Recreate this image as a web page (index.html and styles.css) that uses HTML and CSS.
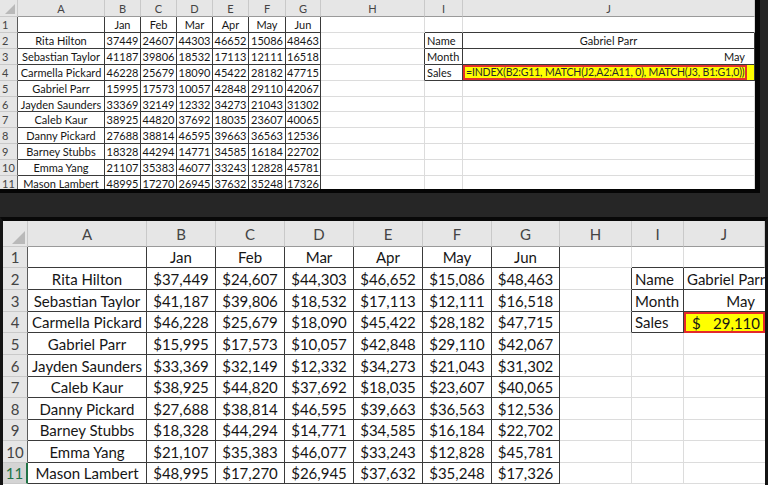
FILE: index.html
```html
<!DOCTYPE html>
<html>
<head>
<meta charset="utf-8">
<link rel="stylesheet" href="styles.css">
</head>
<body>
<div class="screen">
  <div class="top">
    <div class="sheet s1">
      <div class="cn"></div><div class="hd">A</div><div class="hd">B</div><div class="hd">C</div><div class="hd">D</div><div class="hd">E</div><div class="hd">F</div><div class="hd">G</div><div class="hd">H</div><div class="hd">I</div><div class="hd">J</div>
      <div class="rh">1</div><div class="t"></div><div class="t">Jan</div><div class="t">Feb</div><div class="t">Mar</div><div class="t">Apr</div><div class="t">May</div><div class="t">Jun</div><div class="g"></div><div class="g bb"></div><div class="g bb"></div>
      <div class="rh">2</div><div class="t">Rita Hilton</div><div class="t">37449</div><div class="t">24607</div><div class="t">44303</div><div class="t">46652</div><div class="t">15086</div><div class="t">48463</div><div class="g br"></div><div class="t l">Name</div><div class="t">Gabriel Parr</div>
      <div class="rh">3</div><div class="t">Sebastian Taylor</div><div class="t">41187</div><div class="t">39806</div><div class="t">18532</div><div class="t">17113</div><div class="t">12111</div><div class="t">16518</div><div class="g br"></div><div class="t l">Month</div><div class="t r">May</div>
      <div class="rh">4</div><div class="t">Carmella Pickard</div><div class="t">46228</div><div class="t">25679</div><div class="t">18090</div><div class="t">45422</div><div class="t">28182</div><div class="t">47715</div><div class="g br"></div><div class="t l">Sales</div><div class="t fx"><span class="edit">=INDEX(B2:G11, MATCH(J2,A2:A11, 0), MATCH(J3, B1:G1,0))</span></div>
      <div class="rh">5</div><div class="t">Gabriel Parr</div><div class="t">15995</div><div class="t">17573</div><div class="t">10057</div><div class="t">42848</div><div class="t">29110</div><div class="t">42067</div><div class="g"></div><div class="g"></div><div class="g"></div>
      <div class="rh">6</div><div class="t">Jayden Saunders</div><div class="t">33369</div><div class="t">32149</div><div class="t">12332</div><div class="t">34273</div><div class="t">21043</div><div class="t">31302</div><div class="g"></div><div class="g"></div><div class="g"></div>
      <div class="rh">7</div><div class="t">Caleb Kaur</div><div class="t">38925</div><div class="t">44820</div><div class="t">37692</div><div class="t">18035</div><div class="t">23607</div><div class="t">40065</div><div class="g"></div><div class="g"></div><div class="g"></div>
      <div class="rh">8</div><div class="t">Danny Pickard</div><div class="t">27688</div><div class="t">38814</div><div class="t">46595</div><div class="t">39663</div><div class="t">36563</div><div class="t">12536</div><div class="g"></div><div class="g"></div><div class="g"></div>
      <div class="rh">9</div><div class="t">Barney Stubbs</div><div class="t">18328</div><div class="t">44294</div><div class="t">14771</div><div class="t">34585</div><div class="t">16184</div><div class="t">22702</div><div class="g"></div><div class="g"></div><div class="g"></div>
      <div class="rh">10</div><div class="t">Emma Yang</div><div class="t">21107</div><div class="t">35383</div><div class="t">46077</div><div class="t">33243</div><div class="t">12828</div><div class="t">45781</div><div class="g"></div><div class="g"></div><div class="g"></div>
      <div class="rh">11</div><div class="t">Mason Lambert</div><div class="t">48995</div><div class="t">17270</div><div class="t">26945</div><div class="t">37632</div><div class="t">35248</div><div class="t">17326</div><div class="g"></div><div class="g"></div><div class="g"></div>
    </div>
  </div>
  <div class="gap"></div>
  <div class="bottom">
    <div class="sheet s2">
      <div class="cn"></div><div class="hd">A</div><div class="hd">B</div><div class="hd">C</div><div class="hd">D</div><div class="hd">E</div><div class="hd">F</div><div class="hd">G</div><div class="hd">H</div><div class="hd">I</div><div class="hd">J</div>
      <div class="rh">1</div><div class="t"></div><div class="t">Jan</div><div class="t">Feb</div><div class="t">Mar</div><div class="t">Apr</div><div class="t">May</div><div class="t">Jun</div><div class="g"></div><div class="g bb"></div><div class="g bb"></div>
      <div class="rh">2</div><div class="t">Rita Hilton</div><div class="t">$37,449</div><div class="t">$24,607</div><div class="t">$44,303</div><div class="t">$46,652</div><div class="t">$15,086</div><div class="t">$48,463</div><div class="g br"></div><div class="t l">Name</div><div class="t l nr">Gabriel Parr</div>
      <div class="rh">3</div><div class="t">Sebastian Taylor</div><div class="t">$41,187</div><div class="t">$39,806</div><div class="t">$18,532</div><div class="t">$17,113</div><div class="t">$12,111</div><div class="t">$16,518</div><div class="g br"></div><div class="t l">Month</div><div class="t r nr">May</div>
      <div class="rh">4</div><div class="t">Carmella Pickard</div><div class="t">$46,228</div><div class="t">$25,679</div><div class="t">$18,090</div><div class="t">$45,422</div><div class="t">$28,182</div><div class="t">$47,715</div><div class="g br"></div><div class="t l">Sales</div><div class="sel"><span>$</span><span>29,110</span></div>
      <div class="rh">5</div><div class="t">Gabriel Parr</div><div class="t">$15,995</div><div class="t">$17,573</div><div class="t">$10,057</div><div class="t">$42,848</div><div class="t">$29,110</div><div class="t">$42,067</div><div class="g"></div><div class="g"></div><div class="g nr"></div>
      <div class="rh">6</div><div class="t">Jayden Saunders</div><div class="t">$33,369</div><div class="t">$32,149</div><div class="t">$12,332</div><div class="t">$34,273</div><div class="t">$21,043</div><div class="t">$31,302</div><div class="g"></div><div class="g"></div><div class="g nr"></div>
      <div class="rh">7</div><div class="t">Caleb Kaur</div><div class="t">$38,925</div><div class="t">$44,820</div><div class="t">$37,692</div><div class="t">$18,035</div><div class="t">$23,607</div><div class="t">$40,065</div><div class="g"></div><div class="g"></div><div class="g nr"></div>
      <div class="rh">8</div><div class="t">Danny Pickard</div><div class="t">$27,688</div><div class="t">$38,814</div><div class="t">$46,595</div><div class="t">$39,663</div><div class="t">$36,563</div><div class="t">$12,536</div><div class="g"></div><div class="g"></div><div class="g nr"></div>
      <div class="rh">9</div><div class="t">Barney Stubbs</div><div class="t">$18,328</div><div class="t">$44,294</div><div class="t">$14,771</div><div class="t">$34,585</div><div class="t">$16,184</div><div class="t">$22,702</div><div class="g"></div><div class="g"></div><div class="g nr"></div>
      <div class="rh">10</div><div class="t">Emma Yang</div><div class="t">$21,107</div><div class="t">$35,383</div><div class="t">$46,077</div><div class="t">$33,243</div><div class="t">$12,828</div><div class="t">$45,781</div><div class="g"></div><div class="g"></div><div class="g nr"></div>
      <div class="rh cur">11</div><div class="t">Mason Lambert</div><div class="t">$48,995</div><div class="t">$17,270</div><div class="t">$26,945</div><div class="t">$37,632</div><div class="t">$35,248</div><div class="t">$17,326</div><div class="g"></div><div class="g"></div><div class="g nr"></div>
    </div>
  </div>
</div>
</body>
</html>
```

FILE: styles.css
```css
* { box-sizing: border-box; margin: 0; padding: 0; }
html, body { width: 768px; height: 485px; overflow: hidden; }
body { background: #262626; font-family: Lato, "Open Sans", sans-serif; color: #161616; }

.screen { display: flex; flex-direction: column; }

.top {
  width: 760px;
  height: 193px;
  background: #fff;
  border-right: 5px solid #050505;
  border-bottom: 4px solid #050505;
  overflow: hidden;
}
.gap { height: 24px; }
.bottom {
  width: 768px;
  height: 268px;
  background: #fff;
  border-top: 4px solid #080808;
  border-left: 3px solid #141414;
  border-right: 3px solid #141414;
  overflow: hidden;
}

.sheet { display: grid; }
.s1 {
  font-size: 11px;
  grid-template-columns: 18px 87px 36px 36px 36px 36px 37px 35px 104px 38px 292px;
  grid-template-rows: 17px 16px 16px 16px 16px 16px 15px 16px 16px 16px 16px 16px;
}
.s2 {
  font-size: 15px;
  grid-template-columns: 25px 119px 69px 69px 69px 69px 69px 68px 72px 52px 81px;
  grid-template-rows: 26px 21px 22px 22px 21px 22px 22px 21px 22px 21px 22px 21px;
}

.sheet > div {
  display: flex;
  align-items: center;
  justify-content: center;
  white-space: nowrap;
  overflow: hidden;
}

.cn, .hd, .rh {
  background: #e6e6e6;
  color: #444;
  border-right: 1px solid #c9c9c9;
  border-bottom: 1px solid #c9c9c9;
}
.hd { border-bottom-color: #9a9a9a; }
.s1 .rh { justify-content: flex-start; padding-left: 2px; }
.rh { border-right-color: #5a5a5a; }
.rh.cur { background: #d4d4d4; color: #217346; border-right: 2px solid #217346; }

.sheet > .cn { justify-content: flex-end; align-items: flex-end; padding: 0 2px 2px 0; }
.cn::after {
  content: "";
  width: 10px;
  height: 10px;
  background: #b9b9b9;
  clip-path: polygon(100% 0, 100% 100%, 0 100%);
}
.s2 .cn::after { width: 13px; height: 13px; }

.g { border-right: 1px solid #dcdcdc; border-bottom: 1px solid #dcdcdc; }
.t { border-right: 1px solid #3a3a3a; border-bottom: 1px solid #3a3a3a; }
.bb { border-bottom-color: #3a3a3a; }
.br { border-right-color: #3a3a3a; }
.sheet > .nr { border-right: none; }

.sheet > .l { justify-content: flex-start; padding-left: 2px; }
.sheet > .r { justify-content: flex-end; padding-right: 9px; }
.s2 > .l { padding-left: 3px; }
.s2 > .r { padding-right: 10px; }

.sheet > .fx { justify-content: flex-start; background: #ffff00; padding-right: 7px; }
.edit {
  display: inline-block;
  width: 100%;
  height: 15px;
  line-height: 11px;
  border: 2px solid #e2312b;
  background: #ffff00;
  padding-left: 1px;
  color: #2a2a2a;
  font-size: 10.5px;
  letter-spacing: -0.15px;
  white-space: nowrap;
  overflow: hidden;
}

.sheet > .sel {
  background: #ffff00;
  border: 2px solid #e42a2a;
  justify-content: space-between;
  padding: 0 3px 0 6px;
}
```
